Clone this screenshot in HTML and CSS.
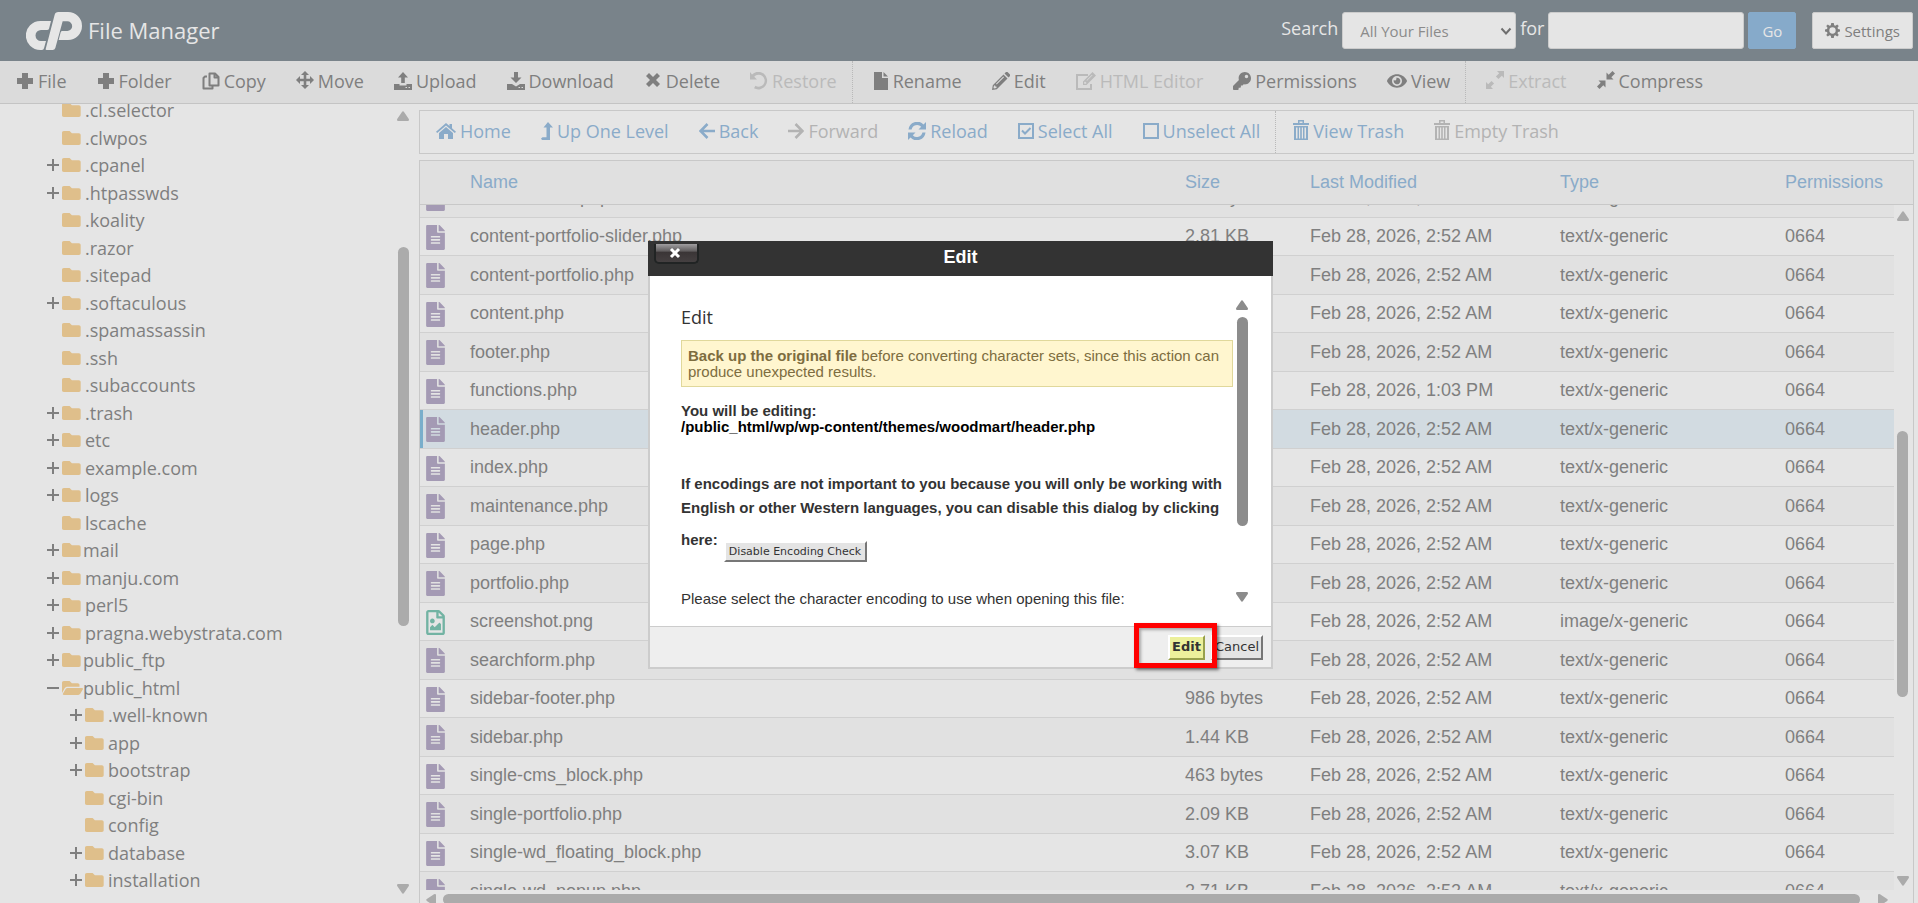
FILE: index.html
```html
<!DOCTYPE html>
<html lang="en">
<head>
<meta charset="utf-8">
<title>File Manager</title>
<link rel="stylesheet" href="styles.css">
</head>
<body>
<svg class="sprite" aria-hidden="true">
  <symbol id="plus" viewBox="0 0 18 18"><path d="M6 1h6v5h5v6h-5v5H6v-5H1V6h5z"/></symbol>
  <symbol id="copy" viewBox="0 0 18 18"><path fill="none" stroke="currentColor" stroke-width="2" stroke-linejoin="round" d="M7.500 1.500h5.500l3.500 3.500v8.500h-9zM12.500 2v3.500h4M5 4.500H3L1.500 6v10.500h9v-2"/></symbol>
  <symbol id="move" viewBox="0 0 18 18"><path d="M9 0l4 4h-2.700v3.700H14V5l4 4-4 4v-2.700h-3.700V14H13l-4 4-4-4h2.700v-3.700H4V13L0 9l4-4v2.700h3.700V4H5z"/></symbol>
  <symbol id="upload" viewBox="0 0 18 18"><path d="M9 0l5 5.500h-3.200V11H7.200V5.500H4zM0 12h5.500v1.500h7V12H18v6H0zM11.500 15v1h1.500v-1zM14.500 15v1H16v-1z" fill-rule="evenodd"/></symbol>
  <symbol id="download" viewBox="0 0 18 18"><path d="M7 0h4v5.500h3.500L9 11 3.500 5.500H7zM0 12h5l4 2.500 4-2.500h5v6H0zM11.500 15v1h1.500v-1zM14.500 15v1H16v-1z" fill-rule="evenodd"/></symbol>
  <symbol id="times" viewBox="0 0 18 18"><path d="M2 5l3-3 4 4 4-4 3 3-4 4 4 4-3 3-4-4-4 4-3-3 4-4z"/></symbol>
  <symbol id="undo" viewBox="0 0 18 18"><path d="M0 0l2 2.500A8.800 8.800 0 1 1 4 16.300l1.500-2.500A6 6 0 1 0 4.200 4.700L7 7.500H0z"/></symbol>
  <symbol id="file" viewBox="0 0 16 18"><path d="M1 0h8v6h6v12H1zM10.500 0L15 4.500h-4.500z"/></symbol>
  <symbol id="pencil" viewBox="0 0 18 18"><path fill-rule="evenodd" d="M11.500 2.500l4 4L4.800 17.200 0 18l.8-4.800zM12.500 1.500L14 0h1.500L18 2.500V4l-1.500 1.500zM2 13.500l-.5 2.500.5.500 2.500-.5v-1.500H3.300v-1zM4 11.800l.7.700 7.300-7.300-.7-.7z"/></symbol>
  <symbol id="edit" viewBox="0 0 20 18"><path fill="none" stroke="currentColor" stroke-width="2" d="M12 3H1v14h14v-5"/><path fill-rule="evenodd" d="M16.500 0L20 3.500l-9.500 9.500H7V9.500zM8.200 10.300v1.500h1.600l.8-.8-1.600-1.500zM10.500 8.300l.5.500 5.500-5.500-.5-.5z"/></symbol>
  <symbol id="key" viewBox="0 0 512 512"><path d="M512 176C512 273 433 352 336 352c-11 0-22-1-33-3l-24 27a24 24 0 0 1-18 8H224v40c0 13-11 24-24 24h-40v40c0 13-11 24-24 24H24c-13 0-24-11-24-24v-78c0-6 3-12 7-17l162-162C163 214 160 195 160 176 160 79 239 0 336 0s176 79 176 176zM336 128c0 27 21 48 48 48s48-21 48-48-21-48-48-48-48 21-48 48z"/></symbol>
  <symbol id="eye" viewBox="0 0 576 512"><path d="M572.520 241.400C518.290 135.590 410.930 64 288 64S57.680 135.640 3.480 241.410a32.350 32.350 0 0 0 0 29.190C57.710 376.410 165.070 448 288 448s230.320-71.640 284.520-177.410a32.350 32.350 0 0 0 0-29.190zM288 400a144 144 0 1 1 144-144 143.930 143.930 0 0 1-144 144zm0-240a95.310 95.310 0 0 0-25.310 3.790 47.850 47.850 0 0 1-66.900 66.900A95.780 95.780 0 1 0 288 160z"/></symbol>
  <symbol id="expand" viewBox="0 0 18 18"><path d="M11 0h7v7l-2.200-2.200-3.300 3.300-2.600-2.600 3.300-3.300zM0 11l2.200 2.200 3.300-3.300 2.600 2.600-3.300 3.300L7 18H0z"/></symbol>
  <symbol id="compress" viewBox="0 0 18 18"><path d="M9.500 1.500l2.200 2.200L15.500 0 18 2.500l-3.700 3.800 2.200 2.200h-7zM1.500 9.500h7v7l-2.200-2.200L2.500 18 0 15.500l3.700-3.800z"/></symbol>
  <symbol id="home" viewBox="0 0 20 18"><path d="M10 1l3.500 3V2H16v4.300l4 3.500-1.200 1.300L10 3.500 1.200 11.100 0 9.800zM10 5l7 6v6h-5v-5H8v5H3v-6z"/></symbol>
  <symbol id="levelup" viewBox="0 0 12 18"><path d="M7 0l5 5.500H9V18H1l-1-1.500 1.500-1.300H5.500V5.500H2.500z"/></symbol>
  <symbol id="left" viewBox="1 1 16 16"><path fill="none" stroke="currentColor" stroke-width="2.600" d="M9.500 2L2.500 9l7 7M2.500 9H17"/></symbol>
  <symbol id="right" viewBox="1 1 16 16"><path fill="none" stroke="currentColor" stroke-width="2.600" d="M8.500 2l7 7-7 7M15.500 9H1"/></symbol>
  <symbol id="sync" viewBox="0 0 18 18"><path d="M18 0v7.500h-7.500l2.700-2.700A5.600 5.600 0 0 0 3.600 7.500H.5A8.700 8.700 0 0 1 15.500 2.500zM0 18v-7.500h7.500l-2.700 2.700a5.600 5.600 0 0 0 9.600-2.700h3.100A8.700 8.700 0 0 1 2.500 15.500z"/></symbol>
  <symbol id="checked" viewBox="1 1 16 16"><path fill="none" stroke="currentColor" stroke-width="2" d="M2 2h14v14H2z"/><path fill="none" stroke="currentColor" stroke-width="2" d="M5 8.500l3 3 5.500-5.500"/></symbol>
  <symbol id="unchecked" viewBox="1 1 16 16"><path fill="none" stroke="currentColor" stroke-width="2" d="M2 2h14v14H2z"/></symbol>
  <symbol id="trash" viewBox="0 0 16 20"><path fill-rule="evenodd" d="M5 0h6v3h5v2H0V3h5zM6.500 1.500V3h3V1.500zM1 6h14v14H1zM3 7.500v11h1.500v-11zM6 7.500v11h1.200v-11zM8.800 7.500v11H10v-11zM11.500 7.500v11H13v-11z"/></symbol>
  <symbol id="cog" viewBox="0 0 18 18"><path fill-rule="evenodd" d="M7.500 0h3l.5 2.600 1.500.6L14.700 1.700l1.800 1.800L15 5.700l.6 1.500 2.400.5v2.600l-2.400.5-.6 1.500 1.500 2.200-1.800 1.800-2.200-1.500-1.500.6-.5 2.600h-3L7 15.400l-1.500-.6-2.200 1.500-1.800-1.800L3 12.300l-.6-1.500L0 10.300V7.700l2.400-.5L3 5.700 1.500 3.500l1.800-1.800 2.200 1.500L7 2.600zM9 5.200a3.800 3.800 0 1 0 0 7.600 3.800 3.800 0 0 0 0-7.600z"/></symbol>
  <symbol id="folder" viewBox="0 64 576 384"><path d="M464 128H272l-64-64H48C21.490 64 0 85.490 0 112v288c0 26.510 21.490 48 48 48h416c26.510 0 48-21.490 48-48V176c0-26.510-21.490-48-48-48z"/></symbol>
  <symbol id="folder-open" viewBox="0 64 576 384"><path d="M572.700 292.100L500.300 416.200A64 64 0 0 1 445 448H45c-18.500 0-30-20-20.700-36.100l72.400-124.100A64 64 0 0 1 152 256h400c18.500 0 30 20 20.700 36.100zM152 224h328v-48c0-26.500-21.500-48-48-48H272l-64-64H48C21.500 64 0 85.500 0 112v278l69-118.400C86.200 242.200 118 224 152 224z"/></symbol>
  <symbol id="text-file" viewBox="0 0 384 512"><path d="M224 136V0H24C10.700 0 0 10.700 0 24v464c0 13.300 10.700 24 24 24h336c13.300 0 24-10.700 24-24V160H248c-13.200 0-24-10.800-24-24zm64 236c0 6.600-5.400 12-12 12H108c-6.600 0-12-5.400-12-12v-8c0-6.600 5.400-12 12-12h168c6.600 0 12 5.400 12 12v8zm0-64c0 6.600-5.400 12-12 12H108c-6.600 0-12-5.400-12-12v-8c0-6.600 5.400-12 12-12h168c6.600 0 12 5.400 12 12v8zm0-72v8c0 6.600-5.400 12-12 12H108c-6.600 0-12-5.400-12-12v-8c0-6.600 5.400-12 12-12h168c6.600 0 12 5.400 12 12zm96-114.100v6.100H256V0h6.100c6.400 0 12.500 2.500 17 7l97.900 98c4.500 4.500 7 10.600 7 16.900z"/></symbol>
  <symbol id="image-file" viewBox="0 0 384 512"><path d="M369.900 97.900L286 14C277 5 264.800 0 252.100 0H48C21.500 0 0 21.500 0 48v416c0 26.500 21.500 48 48 48h288c26.500 0 48-21.500 48-48V131.900c0-12.700-5.100-25-14.100-34zM332.100 128H256V51.900l76.100 76.100zM48 464V48h160v104c0 13.300 10.700 24 24 24h104v288H48zm32-48h224V288l-23.500-23.500c-4.700-4.700-12.300-4.700-17 0L176 352l-39.500-39.500c-4.700-4.700-12.300-4.700-17 0L80 352v64zm48-240c-26.500 0-48 21.500-48 48s21.500 48 48 48 48-21.500 48-48-21.500-48-48-48z"/></symbol>
  <symbol id="open" viewBox="0 0 12 12"><path d="M5 0h2v5h5v2H7v5H5V7H0V5h5z"/></symbol>
  <symbol id="close" viewBox="0 0 12 12"><path d="M0 5h12v2H0z"/></symbol>
  <symbol id="tri-up" viewBox="0 0 12 10"><path d="M4.800 1.200Q6-.8 7.200 1.200L11.800 8q.7 2-1 2H1.200q-1.700 0-1-2z"/></symbol>
  <symbol id="tri-down" viewBox="0 0 12 10"><path d="M4.800 8.800Q6 10.800 7.200 8.800L11.800 2q.7-2-1-2H1.200Q-.5 0 .2 2z"/></symbol>
  <symbol id="tri-left" viewBox="0 0 10 12"><path d="M1.200 4.800Q-.8 6 1.200 7.200L8 11.800q2 .7 2-1V1.200Q10-.5 8 .2z"/></symbol>
  <symbol id="tri-right" viewBox="0 0 10 12"><path d="M8.800 4.800Q10.800 6 8.800 7.200L2 11.800q-2 .7-2-1V1.200Q0-.5 2 .2z"/></symbol>
</svg>

<header class="topbar">
  <svg class="logo" viewBox="0 0 168 114" role="img" aria-label="cPanel"><path d="M75 27H43A43 43 0 0 0 43 114H48Q53 114 54 109L60 87H45A16.500 16.500 0 0 1 45 54H63Q68 54 69 50z"/><path d="M59 111L86 8Q88 0 97 0H126A42 42 0 0 1 126 84H98L104 61Q105 57 109 57H124A14.500 14.500 0 0 0 124 28H110L88 108Q86 114 80 114H62Q58 114 59 111z"/></svg>
  <h1 class="app-name">File Manager</h1>
  <form class="search">
    <label for="scope">Search</label>
    <span class="select-wrap">
      <select id="scope" class="field"><option>All Your Files</option></select>
      <svg class="chevron" viewBox="0 0 12 8"><path d="M1.500 1.500L6 6.500l4.500-5"/></svg>
    </span>
    <label for="term">for</label>
    <input id="term" class="field term" type="text">
    <button class="btn go" type="button">Go</button>
    <button class="btn settings" type="button"><svg><use href="#cog"/></svg>Settings</button>
  </form>
</header>

<nav class="toolbar">
  <button class="tool"><svg><use href="#plus"/></svg>File</button>
  <button class="tool"><svg><use href="#plus"/></svg>Folder</button>
  <button class="tool"><svg><use href="#copy"/></svg>Copy</button>
  <button class="tool"><svg class="raised"><use href="#move"/></svg>Move</button>
  <button class="tool"><svg><use href="#upload"/></svg>Upload</button>
  <button class="tool"><svg><use href="#download"/></svg>Download</button>
  <button class="tool"><svg class="raised"><use href="#times"/></svg>Delete</button>
  <button class="tool" disabled><svg><use href="#undo"/></svg>Restore</button>
  <span class="divider"></span>
  <button class="tool"><svg class="slim"><use href="#file"/></svg>Rename</button>
  <button class="tool"><svg><use href="#pencil"/></svg>Edit</button>
  <button class="tool" disabled><svg class="wide"><use href="#edit"/></svg>HTML Editor</button>
  <button class="tool"><svg><use href="#key"/></svg>Permissions</button>
  <button class="tool"><svg class="wide"><use href="#eye"/></svg>View</button>
  <span class="divider"></span>
  <button class="tool" disabled><svg class="raised"><use href="#expand"/></svg>Extract</button>
  <button class="tool"><svg class="raised"><use href="#compress"/></svg>Compress</button>
</nav>

<main class="workspace">
  <aside class="sidebar">
    <div class="tree-view">
      <ul class="tree">
        <li><svg class="folder"><use href="#folder"/></svg><a href="#">.cl.selector</a></li>
        <li><svg class="folder"><use href="#folder"/></svg><a href="#">.clwpos</a></li>
        <li><button aria-label="Expand"><svg><use href="#open"/></svg></button><svg class="folder"><use href="#folder"/></svg><a href="#">.cpanel</a></li>
        <li><button aria-label="Expand"><svg><use href="#open"/></svg></button><svg class="folder"><use href="#folder"/></svg><a href="#">.htpasswds</a></li>
        <li><svg class="folder"><use href="#folder"/></svg><a href="#">.koality</a></li>
        <li><svg class="folder"><use href="#folder"/></svg><a href="#">.razor</a></li>
        <li><svg class="folder"><use href="#folder"/></svg><a href="#">.sitepad</a></li>
        <li><button aria-label="Expand"><svg><use href="#open"/></svg></button><svg class="folder"><use href="#folder"/></svg><a href="#">.softaculous</a></li>
        <li><svg class="folder"><use href="#folder"/></svg><a href="#">.spamassassin</a></li>
        <li><svg class="folder"><use href="#folder"/></svg><a href="#">.ssh</a></li>
        <li><svg class="folder"><use href="#folder"/></svg><a href="#">.subaccounts</a></li>
        <li><button aria-label="Expand"><svg><use href="#open"/></svg></button><svg class="folder"><use href="#folder"/></svg><a href="#">.trash</a></li>
        <li><button aria-label="Expand"><svg><use href="#open"/></svg></button><svg class="folder"><use href="#folder"/></svg><a href="#">etc</a></li>
        <li><button aria-label="Expand"><svg><use href="#open"/></svg></button><svg class="folder"><use href="#folder"/></svg><a href="#">example.com</a></li>
        <li><button aria-label="Expand"><svg><use href="#open"/></svg></button><svg class="folder"><use href="#folder"/></svg><a href="#">logs</a></li>
        <li><svg class="folder"><use href="#folder"/></svg><a href="#">lscache</a></li>
        <li class="special"><button aria-label="Expand"><svg><use href="#open"/></svg></button><svg class="folder"><use href="#folder"/></svg><a href="#">mail</a></li>
        <li><button aria-label="Expand"><svg><use href="#open"/></svg></button><svg class="folder"><use href="#folder"/></svg><a href="#">manju.com</a></li>
        <li><button aria-label="Expand"><svg><use href="#open"/></svg></button><svg class="folder"><use href="#folder"/></svg><a href="#">perl5</a></li>
        <li><button aria-label="Expand"><svg><use href="#open"/></svg></button><svg class="folder"><use href="#folder"/></svg><a href="#">pragna.webystrata.com</a></li>
        <li class="special"><button aria-label="Expand"><svg><use href="#open"/></svg></button><svg class="folder"><use href="#folder"/></svg><a href="#">public_ftp</a></li>
        <li class="special"><button aria-label="Collapse"><svg><use href="#close"/></svg></button><svg class="folder"><use href="#folder-open"/></svg><a href="#">public_html</a></li>
        <li class="child"><button aria-label="Expand"><svg><use href="#open"/></svg></button><svg class="folder"><use href="#folder"/></svg><a href="#">.well-known</a></li>
        <li class="child"><button aria-label="Expand"><svg><use href="#open"/></svg></button><svg class="folder"><use href="#folder"/></svg><a href="#">app</a></li>
        <li class="child"><button aria-label="Expand"><svg><use href="#open"/></svg></button><svg class="folder"><use href="#folder"/></svg><a href="#">bootstrap</a></li>
        <li class="child"><svg class="folder"><use href="#folder"/></svg><a href="#">cgi-bin</a></li>
        <li class="child"><svg class="folder"><use href="#folder"/></svg><a href="#">config</a></li>
        <li class="child"><button aria-label="Expand"><svg><use href="#open"/></svg></button><svg class="folder"><use href="#folder"/></svg><a href="#">database</a></li>
        <li class="child"><button aria-label="Expand"><svg><use href="#open"/></svg></button><svg class="folder"><use href="#folder"/></svg><a href="#">installation</a></li>
      </ul>
    </div>
    <div class="vscroll tree-scroll"><svg><use href="#tri-up"/></svg><div class="track"><span class="thumb"></span></div><svg><use href="#tri-down"/></svg></div>
  </aside>

  <section class="content">
    <nav class="actions">
      <a class="tool" href="#"><svg class="wide"><use href="#home"/></svg>Home</a>
      <a class="tool" href="#"><svg class="narrow"><use href="#levelup"/></svg>Up One Level</a>
      <a class="tool" href="#"><svg class="slim"><use href="#left"/></svg>Back</a>
      <a class="tool off"><svg class="slim"><use href="#right"/></svg>Forward</a>
      <a class="tool" href="#"><svg><use href="#sync"/></svg>Reload</a>
      <a class="tool" href="#"><svg class="slim"><use href="#checked"/></svg>Select All</a>
      <a class="tool" href="#"><svg class="slim"><use href="#unchecked"/></svg>Unselect All</a>
      <span class="divider flush"></span>
      <a class="tool" href="#"><svg class="can"><use href="#trash"/></svg>View Trash</a>
      <a class="tool off"><svg class="can"><use href="#trash"/></svg>Empty Trash</a>
    </nav>

    <div class="listing">
      <table class="grid head">
        <colgroup><col class="c-icon"><col><col class="c-size"><col class="c-date"><col class="c-type"><col class="c-perm-head"></colgroup>
        <thead><tr><th></th><th>Name</th><th>Size</th><th>Last Modified</th><th>Type</th><th>Permissions</th></tr></thead>
      </table>
      <div class="rows">
        <div class="rows-view">
          <table class="grid body">
            <colgroup><col class="c-icon"><col><col class="c-size"><col class="c-date"><col class="c-type"><col class="c-perm"></colgroup>
            <tbody>
              <tr><td><svg><use href="#text-file"/></svg></td><td>content-none.php</td><td>905 bytes</td><td>Feb 28, 2026, 2:52 AM</td><td>text/x-generic</td><td>0664</td></tr>
              <tr><td><svg><use href="#text-file"/></svg></td><td>content-portfolio-slider.php</td><td>2.81 KB</td><td>Feb 28, 2026, 2:52 AM</td><td>text/x-generic</td><td>0664</td></tr>
              <tr><td><svg><use href="#text-file"/></svg></td><td>content-portfolio.php</td><td></td><td>Feb 28, 2026, 2:52 AM</td><td>text/x-generic</td><td>0664</td></tr>
              <tr><td><svg><use href="#text-file"/></svg></td><td>content.php</td><td></td><td>Feb 28, 2026, 2:52 AM</td><td>text/x-generic</td><td>0664</td></tr>
              <tr><td><svg><use href="#text-file"/></svg></td><td>footer.php</td><td></td><td>Feb 28, 2026, 2:52 AM</td><td>text/x-generic</td><td>0664</td></tr>
              <tr><td><svg><use href="#text-file"/></svg></td><td>functions.php</td><td></td><td>Feb 28, 2026, 1:03 PM</td><td>text/x-generic</td><td>0664</td></tr>
              <tr class="selected"><td><svg><use href="#text-file"/></svg></td><td>header.php</td><td></td><td>Feb 28, 2026, 2:52 AM</td><td>text/x-generic</td><td>0664</td></tr>
              <tr><td><svg><use href="#text-file"/></svg></td><td>index.php</td><td></td><td>Feb 28, 2026, 2:52 AM</td><td>text/x-generic</td><td>0664</td></tr>
              <tr><td><svg><use href="#text-file"/></svg></td><td>maintenance.php</td><td></td><td>Feb 28, 2026, 2:52 AM</td><td>text/x-generic</td><td>0664</td></tr>
              <tr><td><svg><use href="#text-file"/></svg></td><td>page.php</td><td></td><td>Feb 28, 2026, 2:52 AM</td><td>text/x-generic</td><td>0664</td></tr>
              <tr><td><svg><use href="#text-file"/></svg></td><td>portfolio.php</td><td></td><td>Feb 28, 2026, 2:52 AM</td><td>text/x-generic</td><td>0664</td></tr>
              <tr><td><svg class="image"><use href="#image-file"/></svg></td><td>screenshot.png</td><td></td><td>Feb 28, 2026, 2:52 AM</td><td>image/x-generic</td><td>0664</td></tr>
              <tr><td><svg><use href="#text-file"/></svg></td><td>searchform.php</td><td></td><td>Feb 28, 2026, 2:52 AM</td><td>text/x-generic</td><td>0664</td></tr>
              <tr><td><svg><use href="#text-file"/></svg></td><td>sidebar-footer.php</td><td>986 bytes</td><td>Feb 28, 2026, 2:52 AM</td><td>text/x-generic</td><td>0664</td></tr>
              <tr><td><svg><use href="#text-file"/></svg></td><td>sidebar.php</td><td>1.44 KB</td><td>Feb 28, 2026, 2:52 AM</td><td>text/x-generic</td><td>0664</td></tr>
              <tr><td><svg><use href="#text-file"/></svg></td><td>single-cms_block.php</td><td>463 bytes</td><td>Feb 28, 2026, 2:52 AM</td><td>text/x-generic</td><td>0664</td></tr>
              <tr><td><svg><use href="#text-file"/></svg></td><td>single-portfolio.php</td><td>2.09 KB</td><td>Feb 28, 2026, 2:52 AM</td><td>text/x-generic</td><td>0664</td></tr>
              <tr><td><svg><use href="#text-file"/></svg></td><td>single-wd_floating_block.php</td><td>3.07 KB</td><td>Feb 28, 2026, 2:52 AM</td><td>text/x-generic</td><td>0664</td></tr>
              <tr><td><svg><use href="#text-file"/></svg></td><td>single-wd_popup.php</td><td>2.71 KB</td><td>Feb 28, 2026, 2:52 AM</td><td>text/x-generic</td><td>0664</td></tr>
            </tbody>
          </table>
        </div>
        <div class="vscroll list-scroll"><svg><use href="#tri-up"/></svg><div class="track"><span class="thumb"></span></div><svg><use href="#tri-down"/></svg></div>
      </div>
      <div class="hscroll"><svg><use href="#tri-left"/></svg><span class="thumb"></span><svg><use href="#tri-right"/></svg></div>
    </div>
  </section>
</main>

<div class="dialog" role="dialog" aria-labelledby="dialog-title">
  <div class="dialog-bar">
    <button class="dialog-close" aria-label="Close"><svg viewBox="0 0 12 12"><path d="M2 2l8 8M10 2l-8 8"/></svg></button>
    <h2 id="dialog-title">Edit</h2>
  </div>
  <div class="dialog-body">
    <div class="dialog-text">
      <h3>Edit</h3>
      <p class="notice"><strong>Back up the original file</strong> before converting character sets, since this action can produce unexpected results.</p>
      <p class="target">You will be editing:<br><span>/public_html/wp/wp-content/themes/woodmart/header.php</span></p>
      <p class="hint">If encodings are not important to you because you will only be working with English or other Western languages, you can disable this dialog by clicking here: <button class="bevel small">Disable Encoding Check</button></p>
      <p class="ask">Please select the character encoding to use when opening this file:</p>
    </div>
    <div class="vscroll dialog-scroll"><svg><use href="#tri-up"/></svg><div class="track"><span class="thumb"></span></div><svg><use href="#tri-down"/></svg></div>
  </div>
  <div class="dialog-foot">
    <button class="bevel primary">Edit</button>
    <button class="bevel">Cancel</button>
    <span class="highlight"></span>
  </div>
</div>
</body>
</html>
```

FILE: styles.css
```css
* { box-sizing: border-box; }

body {
  margin: 0;
  height: 100vh;
  overflow: hidden;
  display: flex;
  flex-direction: column;
  background: #e5e5e5;
  color: #7f7f7f;
  font: 400 18px/24px "Open Sans", sans-serif;
}

h1, h2, h3, p, ul { margin: 0; padding: 0; }
button, select, input { font: inherit; color: inherit; margin: 0; }
a { color: inherit; text-decoration: none; }
svg { fill: currentColor; flex: none; }
.sprite { position: absolute; width: 0; height: 0; }

/* Top bar */
.topbar {
  flex: none;
  height: 61px;
  display: flex;
  align-items: center;
  padding: 0 5px 0 26px;
  background: #79838a;
  color: #e6e6e6;
}
.logo { width: 56px; height: 38px; }
.app-name { margin-left: 6px; padding-bottom: 2px; font-size: 22px; line-height: 32px; font-weight: 400; }
.search { margin-left: auto; display: flex; align-items: center; gap: 4px; }
.search label { padding-bottom: 5px; }
.field {
  height: 37px;
  border: 1px solid #cccccc;
  border-radius: 3px;
  background: #e5e5e5;
  color: #8b8b8b;
  font-size: 15px;
}
.select-wrap { position: relative; display: flex; }
select.field { width: 174px; padding: 0 17px; appearance: none; }
.chevron {
  position: absolute;
  right: 4px;
  top: 15px;
  width: 12px;
  height: 8px;
  fill: none;
  stroke: #6f6f6f;
  stroke-width: 2;
}
.term { width: 196px; padding: 0 8px; }
.btn {
  height: 37px;
  border: 1px solid #cccccc;
  border-radius: 2px;
  background: #e5e5e5;
  color: #7f7f7f;
  font-size: 15px;
  padding: 0 13px;
}
.go { border-color: #86aaca; background: #86aaca; color: #e6e6e6; }
.settings { display: flex; align-items: center; gap: 4px; margin-left: 12px; padding: 0 12px; }
.settings svg { width: 15px; height: 15px; }

/* Toolbars */
.toolbar {
  flex: none;
  height: 43px;
  display: flex;
  padding-left: 1px;
  background: #dbdbdb;
  border-bottom: 1px solid #c4c4c4;
}
.tool {
  display: flex;
  align-items: center;
  gap: 4px;
  padding: 0 15px 2px;
  border: 0;
  background: none;
  white-space: nowrap;
}
.tool:disabled { color: #bababa; }
.tool svg { width: 18px; height: 18px; }
.tool svg.raised { margin-bottom: 3px; }
.tool svg.slim { width: 16px; }
.tool svg.narrow { width: 12px; }
.tool svg.wide { width: 20px; }
.tool svg.can { width: 16px; height: 20px; margin-bottom: 3px; }
.divider { width: 6px; border-left: 1px dotted #b9b9b9; }
.divider.flush { width: 3px; }

.workspace { flex: 1; min-height: 0; display: flex; }

/* Scrollbars */
.vscroll { display: flex; flex-direction: column; align-items: center; color: #ababab; flex: none; }
.vscroll svg { width: 12px; height: 10px; }
.track { flex: 1; display: flex; flex-direction: column; align-items: center; }
.track::before, .track::after { content: ""; }
.track .thumb { width: 11px; border-radius: 6px; background: currentColor; }

/* Folder tree */
.sidebar { flex: 0 0 419px; display: flex; min-height: 0; }
.tree-view { flex: 1; overflow: hidden; }
.tree { list-style: none; margin-top: -8px; }
.tree li {
  height: 27px;
  padding-left: 62px;
  display: flex;
  align-items: center;
}
.tree li:nth-child(odd) { height: 28px; }
.tree .child { padding-left: 85px; }
.tree button {
  width: 12px;
  height: 12px;
  margin-left: -15px;
  margin-right: 3px;
  padding: 0;
  border: 0;
  background: none;
  display: flex;
}
.tree button svg { width: 12px; height: 12px; }
.folder { width: 21px; height: 14px; color: #dfbf8b; }
.tree a { padding-left: 2px; }
.tree .special a { padding-left: 0; }
.tree-scroll { width: 18px; margin-right: 7px; padding: 7px 0 9px; }
.tree-scroll .track::before { flex: 126; }
.tree-scroll .thumb { flex: 379; }
.tree-scroll .track::after { flex: 258; }

/* File list */
.content { flex: 1; min-width: 0; display: flex; flex-direction: column; padding: 6px 4px 0 0; gap: 6px; }
.actions {
  flex: none;
  height: 44px;
  display: flex;
  padding-left: 1px;
  border: 1px solid #c8c8c8;
  color: #8aabc9;
}
.off { color: #b3b3b3; }
.listing {
  flex: 1;
  min-height: 0;
  display: flex;
  flex-direction: column;
  border: 1px solid #c8c8c8;
  border-bottom: 0;
  font-family: "Liberation Sans", Arial, sans-serif;
}
.grid { width: 100%; table-layout: fixed; border-collapse: collapse; }
.grid th, .grid td { padding: 0; text-align: left; white-space: nowrap; font-weight: 400; }
.grid .c-icon { width: 50px; }
.grid .c-size { width: 125px; }
.grid .c-date { width: 250px; }
.grid .c-type { width: 225px; }
.grid .c-perm { width: 109px; }
.grid .c-perm-head { width: 128px; }
.head { background: #e0e0e0; color: #8aabc9; }
.head th { height: 43px; border-bottom: 1px solid #c8c8c8; }
.rows { flex: 1; min-height: 0; display: flex; }
.rows-view { flex: 1; overflow: hidden; }
.body { margin-top: -26px; }
.body td { height: 38px; padding-bottom: 1px; border-bottom: 1px solid #d0d0d0; line-height: 20px; }
.body tr:nth-child(odd) td { height: 39px; background: #e1e1e1; }
.body tr:nth-child(even) td { background: #e5e5e5; }
.body tr.selected td { background: #d2dbe1; }
.body tr.selected td:first-child { box-shadow: inset 3px 0 #79aecb; }
.body td:first-child { padding: 1px 0 0; }
.body svg { display: block; width: 19px; height: 25px; margin-left: 6px; color: #a49ab4; }
.body svg.image { color: #72b3a3; }
.list-scroll { width: 19px; margin: 0 1px 0 -1px; padding: 6px 0 4px; }
.list-scroll .track::before { flex: 210; }
.list-scroll .thumb { flex: 265; }
.list-scroll .track::after { flex: 179; }
.hscroll { flex: none; height: 13px; display: flex; padding: 4px 25px 0 6px; color: #ababab; overflow: hidden; }
.hscroll svg { width: 10px; height: 12px; }
.hscroll .thumb { flex: 1; height: 11px; margin: 0 18px 0 7px; border-radius: 6px; background: currentColor; }

/* Edit dialog */
.dialog {
  position: absolute;
  left: calc(50% - 311px);
  top: 241px;
  width: 625px;
  border: 2px solid #cccccc;
  border-top: 0;
  background: #ffffff;
  color: #333333;
  font: 15px/16px "Liberation Sans", Arial, sans-serif;
}
.dialog-bar {
  position: relative;
  margin: 0 -2px;
  height: 35px;
  display: flex;
  align-items: center;
  justify-content: center;
  background: #333333;
  color: #ffffff;
}
.dialog-bar h2 { font-size: 18px; line-height: 20px; padding-bottom: 4px; }
.dialog-close {
  position: absolute;
  left: 6px;
  top: 3px;
  width: 45px;
  height: 20px;
  padding: 0 4px 0 0;
  border: 2px solid #212424;
  border-top: 0;
  border-radius: 0 0 5px 5px;
  background: linear-gradient(#a09ea0, #5f5c5d 40%, #3a3536 45%, #454041);
  display: flex;
  align-items: center;
  justify-content: center;
}
.dialog-close svg { width: 12px; height: 12px; stroke: #ffffff; stroke-width: 3; }
.dialog-body { display: flex; padding: 19px 20px 16px 31px; border-bottom: 1px solid #cccccc; }
.dialog-text { flex: 1; padding: 10px 0 3px; }
.dialog-text h3 { font: 400 18px/24px "Open Sans", sans-serif; }
.notice {
  margin-top: 11px;
  padding: 7px 6px 6px;
  border: 1px solid #e0d89b;
  background: #fff6cf;
  color: #7d6d3f;
}
.target { margin-top: 16px; font-weight: 700; }
.target span { color: #000000; }
.hint { margin-top: 37px; font-weight: 700; line-height: 24px; }
.ask { margin-top: 29px; }
.dialog-scroll { width: 18px; padding: 5px 0 8px; color: #8c8c8c; }
.dialog-scroll .track::before { flex: 7; }
.dialog-scroll .thumb { flex: 209; }
.dialog-scroll .track::after { flex: 66; }
.dialog-foot {
  position: relative;
  display: flex;
  justify-content: flex-end;
  align-items: center;
  gap: 6px;
  height: 40px;
  padding: 0 8px;
  background: #eeeeee;
}
.bevel {
  height: 25px;
  padding: 0 2px;
  border: 2px solid;
  border-color: #ffffff #777777 #777777 #ffffff;
  background: #e4e4e4;
  color: #333333;
  font: 13px/16px "DejaVu Sans", Verdana, sans-serif;
  white-space: nowrap;
}
.bevel.small { height: 21px; margin: 21px 0 0 2px; padding: 0 4px 0 3px; font-size: 11px; vertical-align: middle; }
.bevel.primary { background: #ecf09b; border-color: #ffffff #98a04c #98a04c #ffffff; font-weight: 700; }
.highlight {
  position: absolute;
  right: 54px;
  top: -4px;
  width: 83px;
  height: 45px;
  border: 5px solid #ff0000;
  box-shadow: 2px 2px 3px rgba(0, 0, 0, 0.5), inset 2px 2px 3px rgba(0, 0, 0, 0.3);
  pointer-events: none;
}
```
